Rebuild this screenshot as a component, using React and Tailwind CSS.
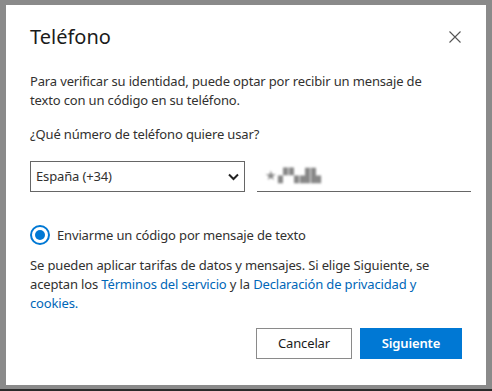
export default function App() {
  return (
    <div className="w-[492px] h-[391px] bg-[#8a8a8a] relative overflow-hidden" style={{ fontFamily: '"Noto Sans", "Open Sans", sans-serif' }}>
      <div className="absolute left-0 bottom-0 w-full h-[2px] bg-[#2a2a2a]" />
      <div className="absolute left-[6px] top-[5px] w-[480px] h-[380px] bg-white text-[#323130] flex flex-col px-[24px] tracking-[-0.15px]">
        <div className="flex items-center justify-between mt-[20px] h-[24px]">
          <h1 className="text-[20px] leading-[24px] text-[#1b1b1b] tracking-normal">Teléfono</h1>
          <svg width="12" height="12" viewBox="0 0 12 12" className="mr-[1px]" fill="none" stroke="#555" strokeWidth="1.1">
            <path d="M0.5 0.5 L11.5 11.5 M11.5 0.5 L0.5 11.5" />
          </svg>
        </div>
        <p className="mt-[23px] max-w-[418px] text-[13px] leading-[19px]">Para verificar su identidad, puede optar por recibir un mensaje de texto con un código en su teléfono.</p>
        <p className="mt-[15px] text-[13px] leading-[19px]">¿Qué número de teléfono quiere usar?</p>
        <div className="flex items-end gap-[12px] mt-[17px]">
          <div className="shrink-0 w-[215px] h-[31px] border border-[#666] flex items-center justify-between px-[5px] text-[13px]">
            <span>España (+34)</span>
            <svg width="11" height="8" viewBox="0 0 11 8" fill="none" stroke="#222" strokeWidth="2">
              <path d="M1 1.5 L5.5 6 L10 1.5" />
            </svg>
          </div>
          <div className="shrink-0 w-[214px] h-[31px] border-b border-[#666] flex items-center pl-[8px]">
            <span className="text-[13px] text-[#888] tracking-[1px] blur-[1px]">★▞▚▟▙</span>
          </div>
        </div>
        <div className="flex items-center mt-[33px] gap-[7px]">
          <div className="w-[20px] h-[20px] rounded-full border-[2px] border-[#0078d4] flex items-center justify-center">
            <div className="w-[10px] h-[10px] rounded-full bg-[#0078d4]" />
          </div>
          <span className="text-[13px] leading-[19px]">Enviarme un código por mensaje de texto</span>
        </div>
        <p className="mt-[11px] text-[13px] leading-[19px]">
          Se pueden aplicar tarifas de datos y mensajes. Si elige Siguiente, se aceptan los{" "}
          <span className="text-[#0067b8]">Términos del servicio</span> y la{" "}
          <span className="text-[#0067b8]">Declaración de privacidad y cookies.</span>
        </p>
        <div className="flex justify-end gap-[8px] mt-[15px]">
          <button className="w-[96px] h-[31px] border border-[#8a8a8a] text-[13px] text-[#1b1b1b] bg-white">Cancelar</button>
          <button className="w-[102px] h-[31px] bg-[#0078d4] text-white text-[13px] font-semibold">Siguiente</button>
        </div>
      </div>
    </div>
  );
}
